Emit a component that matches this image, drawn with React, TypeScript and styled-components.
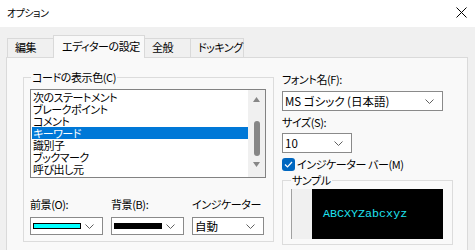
import React from 'react';
import styled, { createGlobalStyle } from 'styled-components';

const GlobalStyle = createGlobalStyle`
  html, body {
    margin: 0;
    padding: 0;
  }
  body {
    width: 475px;
    height: 250px;
    overflow: hidden;
    background: #f0f0f0;
    color: #000;
    font-family: "Noto Sans CJK JP", "Noto Sans", sans-serif;
    font-size: 11px;
    letter-spacing: -0.4px;
    font-feature-settings: "palt";
  }
`;

const Window = styled.div`
  width: 475px;
  height: 250px;
  display: flex;
  flex-direction: column;
`;

const TitleBar = styled.div`
  height: 27px;
  flex: none;
  background: #fff;
  display: flex;
  align-items: center;
  justify-content: space-between;
  padding: 0 8px 2px 7px;
  box-sizing: border-box;
`;

const Title = styled.span`
  font-size: 10px;
  line-height: 14px;
  letter-spacing: -0.5px;
`;

const Body = styled.div`
  flex: 1;
  display: flex;
  flex-direction: column;
  padding: 8px 7px 0 6px;
  min-height: 0;
`;

const TabStrip = styled.div`
  display: flex;
  align-items: flex-end;
  height: 22px;
  padding-left: 1px;
  position: relative;
  z-index: 1;
`;

const Tab = styled.div<{ $w: number; $active?: boolean }>`
  width: ${p => p.$w}px;
  height: ${p => (p.$active ? 23 : 19)}px;
  margin-bottom: ${p => (p.$active ? -1 : 0)}px;
  margin-left: -1px;
  box-sizing: border-box;
  border: 1px solid #d9d9d9;
  border-bottom: none;
  background: ${p => (p.$active ? '#f9f9f9' : '#f0f0f0')};
  padding: ${p => (p.$active ? '3px 0 0 8px' : '1px 0 0 7px')};
  font-size: 11px;
  letter-spacing: -0.5px;
  line-height: 15px;
  white-space: nowrap;
  &:first-child {
    margin-left: 0;
  }
`;

const Panel = styled.div`
  flex: 1;
  display: flex;
  align-items: flex-start;
  gap: 8px;
  background: #f9f9f9;
  border: 1px solid #dadada;
  border-bottom: none;
  padding: 13px 0 0 16px;
`;

const GroupBox = styled.fieldset<{ $w: number; $pad: string }>`
  width: ${p => p.$w}px;
  box-sizing: border-box;
  margin: 0;
  border: 1px solid #dcdcdc;
  padding: ${p => p.$pad};
  min-width: 0;
`;

const Legend = styled.legend<{ $x: number }>`
  margin-left: ${p => p.$x}px;
  padding: 0 1px;
  font-size: 11px;
  line-height: 12px;
`;

const ListBox = styled.div`
  height: 89px;
  box-sizing: border-box;
  border: 1px solid #828282;
  background: #fff;
  display: flex;
`;

const Items = styled.div`
  flex: 1;
  padding: 1px 0 0 1px;
`;

const Item = styled.div<{ $selected?: boolean }>`
  height: 12px;
  line-height: 12px;
  padding-left: 1px;
  font-size: 11px;
  letter-spacing: -0.5px;
  white-space: nowrap;
  background: ${p => (p.$selected ? '#0078d7' : 'transparent')};
  color: ${p => (p.$selected ? '#fff' : '#000')};
`;

const ScrollBar = styled.div`
  width: 17px;
  background: #f0f0f0;
  display: flex;
  flex-direction: column;
  align-items: center;
  padding-top: 7px;
  box-sizing: border-box;
`;

const Thumb = styled.div`
  width: 6px;
  height: 35px;
  margin: 19px 0 6px;
  border-radius: 3px;
  background: #868686;
`;

const ColorRow = styled.div`
  display: flex;
  gap: 8px;
  margin-top: 20px;
`;

const Field = styled.div<{ $w: number }>`
  width: ${p => p.$w}px;
  display: flex;
  flex-direction: column;
  gap: 7px;
`;

const Label = styled.div`
  font-size: 11px;
  line-height: 12px;
  white-space: nowrap;
`;

const Combo = styled.div<{ $w?: number; $h: number }>`
  width: ${p => (p.$w ? `${p.$w}px` : 'auto')};
  height: ${p => p.$h}px;
  box-sizing: border-box;
  border: 1px solid #8a8a8a;
  background: #fff;
  display: flex;
  align-items: center;
  padding: 0 8px 0 2px;
  font-size: 11.5px;
  letter-spacing: 0;
  line-height: 14px;
  white-space: nowrap;
`;

const ComboText = styled.span`
  flex: 1;
`;

const Swatch = styled.div<{ $color: string }>`
  width: 48px;
  height: 6px;
  box-sizing: border-box;
  border: 1px solid #000;
  background: ${p => p.$color};
  margin-right: auto;
`;

const RightColumn = styled.div`
  display: flex;
  flex-direction: column;
  width: 171px;
  padding-top: 2px;
`;

const CheckRow = styled.div`
  display: flex;
  align-items: center;
  gap: 2px;
  margin-top: 5px;
  font-size: 11px;
  line-height: 13px;
`;

const CheckBox = styled.div`
  width: 13px;
  height: 13px;
  border-radius: 3px;
  background: #0067c0;
  display: flex;
  align-items: center;
  justify-content: center;
`;

const Preview = styled.div`
  height: 50px;
  width: 152px;
  display: flex;
  background: #000;
`;

const Gutter = styled.div`
  width: 20px;
  background: #f0f0f0;
  border-left: 1px solid #a0a0a0;
`;

const SampleText = styled.div`
  flex: 1;
  display: flex;
  align-items: center;
  padding: 0 0 0 11px;
  color: #1fe3f0;
  font-family: "Liberation Mono", "DejaVu Sans Mono", monospace;
  font-size: 11.7px;
  letter-spacing: 0;
`;

const Chevron = () => (
  <svg width="9" height="5" viewBox="0 0 9 5">
    <path d="M0.5 0.5 L4.5 4.5 L8.5 0.5" fill="none" stroke="#606060" strokeWidth="1" />
  </svg>
);

const Arrow = ({ down }: { down?: boolean }) => (
  <svg width="7" height="5" viewBox="0 0 7 5">
    <path d={down ? 'M0 0 H7 L3.5 5 Z' : 'M0 5 H7 L3.5 0 Z'} fill="#868686" />
  </svg>
);

const Close = () => (
  <svg width="11" height="11" viewBox="0 0 11 11">
    <path d="M0.5 0.5 L10.5 10.5 M10.5 0.5 L0.5 10.5" stroke="#000" strokeWidth="1" />
  </svg>
);

const tabs = [
  { label: '編集', w: 47 },
  { label: 'エディターの設定', w: 92 },
  { label: '全般', w: 47 },
  { label: 'ドッキング', w: 54 },
];

const items = ['次のステートメント', 'ブレークポイント', 'コメント', 'キーワード', '識別子', 'ブックマーク', '呼び出し元'];

export default function App() {
  return (
    <Window>
      <GlobalStyle />
      <TitleBar>
        <Title>オプション</Title>
        <Close />
      </TitleBar>
      <Body>
        <TabStrip>
          {tabs.map((t, i) => (
            <Tab key={t.label} $w={t.w} $active={i === 1}>
              {t.label}
            </Tab>
          ))}
        </TabStrip>
        <Panel>
          <GroupBox $w={251} $pad="6px 7px 6px 6px">
            <Legend $x={1}>コードの表示色(C)</Legend>
            <ListBox>
              <Items>
                {items.map((it, i) => (
                  <Item key={it} $selected={i === 3}>
                    {it}
                  </Item>
                ))}
              </Items>
              <ScrollBar>
                <Arrow />
                <Thumb />
                <Arrow down />
              </ScrollBar>
            </ListBox>
            <ColorRow>
              <Field $w={73}>
                <Label>前景(O):</Label>
                <Combo $h={18}>
                  <Swatch $color="#00ffff" />
                  <Chevron />
                </Combo>
              </Field>
              <Field $w={73}>
                <Label>背景(B):</Label>
                <Combo $h={18}>
                  <Swatch $color="#000" />
                  <Chevron />
                </Combo>
              </Field>
              <Field $w={72}>
                <Label>インジケーター</Label>
                <Combo $h={18}>
                  <ComboText>自動</ComboText>
                  <Chevron />
                </Combo>
              </Field>
            </ColorRow>
          </GroupBox>
          <RightColumn>
            <Label>フォント名(F):</Label>
            <Combo $w={161} $h={20} style={{ marginTop: 6 }}>
              <ComboText>MS ゴシック (日本語)</ComboText>
              <Chevron />
            </Combo>
            <Label style={{ marginTop: 5 }}>サイズ(S):</Label>
            <Combo $w={70} $h={20} style={{ marginTop: 5 }}>
              <ComboText>10</ComboText>
              <Chevron />
            </Combo>
            <CheckRow>
              <CheckBox>
                <svg width="9" height="7" viewBox="0 0 9 7">
                  <path d="M1 3.5 L3.5 6 L8 1" fill="none" stroke="#fff" strokeWidth="1.2" />
                </svg>
              </CheckBox>
              インジケーター バー(M)
            </CheckRow>
            <GroupBox $w={171} $pad="3px 9px 5px 8px" style={{ marginTop: 3 }}>
              <Legend $x={0}>サンプル</Legend>
              <Preview>
                <Gutter />
                <SampleText>ABCXYZabcxyz</SampleText>
              </Preview>
            </GroupBox>
          </RightColumn>
        </Panel>
      </Body>
    </Window>
  );
}
